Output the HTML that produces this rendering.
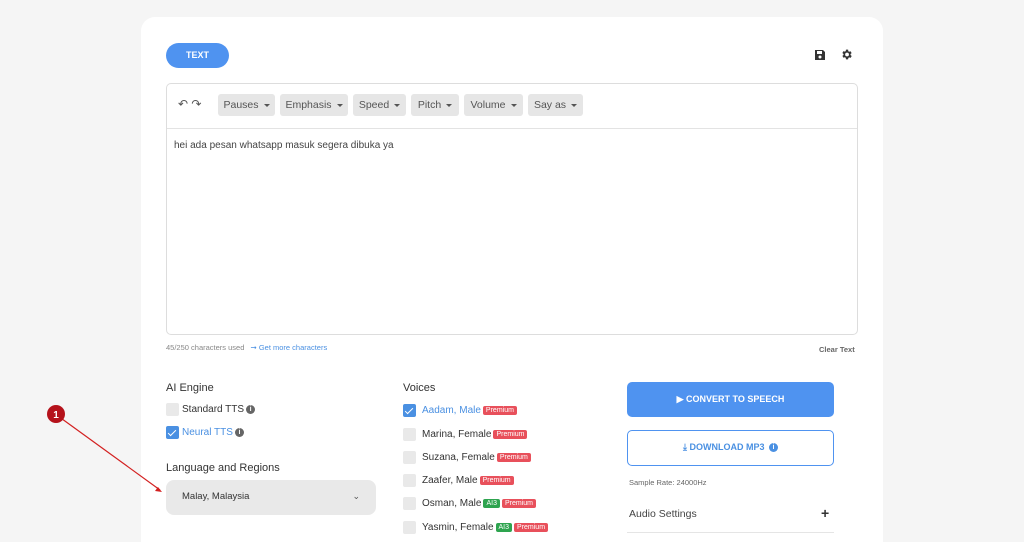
<!DOCTYPE html>
<html><head><meta charset="utf-8"><style>
*{box-sizing:border-box;margin:0;padding:0}
html,body{width:1024px;height:542px;overflow:hidden}
body{background:#f5f5f5;font-family:"Liberation Sans",sans-serif;position:relative;color:#333}
.card{position:absolute;left:141px;top:17px;width:742px;height:525px;background:#fff;border-radius:14px 14px 0 0}
.a{position:absolute}
.btn{position:absolute;top:94px;height:22px;background:#e6e6e6;border-radius:3px;font-size:10.5px;color:#555;line-height:22px;text-align:center}
.btn:after{content:"";display:inline-block;margin-left:5px;vertical-align:middle;border-left:3px solid transparent;border-right:3px solid transparent;border-top:3px solid #555}
.cb{position:absolute;width:13px;height:13px;background:#e9e9e9;border-radius:2px}
.cb.on{background:#4a90e2}
.cb.on:after{content:"";position:absolute;left:4px;top:1.5px;width:3px;height:7px;border:solid #fff;border-width:0 1.5px 1.5px 0;transform:rotate(45deg)}
.lbl{position:absolute;font-size:10px;color:#333}
.prem{display:inline-block;background:#e8505b;color:#fff;font-size:7px;padding:1px 3px;border-radius:2px;vertical-align:middle;margin-left:2px}
.ai{display:inline-block;background:#2ea44f;color:#fff;font-size:7px;padding:1px 3px;border-radius:2px;vertical-align:middle;margin-left:2px}
.info{display:inline-block;width:9px;height:9px;border-radius:50%;background:#666;color:#fff;font-size:7px;line-height:9px;text-align:center;font-weight:bold;vertical-align:middle;margin-left:2px}
</style></head><body>
<div class="card"></div>
<div class="a" style="left:166px;top:43px;width:63px;height:25px;background:#4f93f0;border-radius:13px;color:#fff;font-size:9px;font-weight:bold;text-align:center;line-height:25px">TEXT</div>
<svg class="a" style="left:814px;top:49px" width="12" height="12" viewBox="0 0 12 12"><path d="M1 1h8l2 2v8H1z" fill="#333"/><rect x="3" y="2" width="5" height="3" fill="#fff"/><circle cx="6" cy="8" r="1.5" fill="#fff"/></svg>
<svg class="a" style="left:840px;top:48px" width="13" height="13" viewBox="0 0 24 24"><path fill="#333" d="M19.4 13a7.5 7.5 0 0 0 0-2l2.1-1.6-2-3.5-2.5 1a7 7 0 0 0-1.7-1L15 3h-4l-.4 2.7a7 7 0 0 0-1.7 1l-2.5-1-2 3.5L6.5 11a7.5 7.5 0 0 0 0 2l-2.1 1.6 2 3.5 2.5-1a7 7 0 0 0 1.7 1L11 21h4l.4-2.7a7 7 0 0 0 1.7-1l2.5 1 2-3.5zM13 15.5a3.5 3.5 0 1 1 0-7 3.5 3.5 0 0 1 0 7z"/></svg>
<div class="a" style="left:166px;top:83px;width:692px;height:252px;border:1px solid #ddd;border-radius:5px"></div>
<div class="a" style="left:167px;top:128px;width:690px;height:1px;background:#e3e3e3"></div>
<div class="a" style="left:178px;top:97px;font-size:12px;color:#555">↶ ↷</div>
<div class="btn" style="left:218px;width:57px">Pauses</div>
<div class="btn" style="left:280px;width:68px">Emphasis</div>
<div class="btn" style="left:353px;width:53px">Speed</div>
<div class="btn" style="left:411px;width:48px">Pitch</div>
<div class="btn" style="left:464px;width:59px">Volume</div>
<div class="btn" style="left:528px;width:55px">Say as</div>
<div class="a" style="left:174px;top:140px;font-size:10px;color:#444">hei ada pesan whatsapp masuk segera dibuka ya</div>
<div class="a" style="left:166px;top:343px;font-size:7.5px;color:#888">45/250 characters used <span style="color:#4a90e2;margin-left:4px">➞ Get more characters</span></div>
<div class="a" style="left:819px;top:345px;font-size:7.5px;color:#666;font-weight:bold">Clear Text</div>
<div class="a" style="left:166px;top:382px;font-size:11px">AI Engine</div>
<div class="cb" style="left:166px;top:403px"></div><div class="lbl" style="left:182px;top:404px">Standard TTS<span class="info">i</span></div>
<div class="cb on" style="left:166px;top:426px"></div><div class="lbl" style="left:182px;top:427px;color:#4a90e2">Neural TTS<span class="info">i</span></div>
<div class="a" style="left:166px;top:462px;font-size:11px">Language and Regions</div>
<div class="a" style="left:166px;top:480px;width:210px;height:35px;background:#e9e9e9;border-radius:8px;font-size:9.5px;line-height:33px;padding-left:16px;color:#333">Malay, Malaysia<span style="position:absolute;right:16px;font-size:9px;color:#555">⌄</span></div>
<div class="a" style="left:403px;top:382px;font-size:11px">Voices</div>
<div class="cb on" style="left:403px;top:404px"></div><div class="lbl" style="left:422px;top:405px;color:#4a90e2">Aadam, Male<span class="prem">Premium</span></div>
<div class="cb" style="left:403px;top:428px"></div><div class="lbl" style="left:422px;top:429px">Marina, Female<span class="prem">Premium</span></div>
<div class="cb" style="left:403px;top:451px"></div><div class="lbl" style="left:422px;top:452px">Suzana, Female<span class="prem">Premium</span></div>
<div class="cb" style="left:403px;top:474px"></div><div class="lbl" style="left:422px;top:475px">Zaafer, Male<span class="prem">Premium</span></div>
<div class="cb" style="left:403px;top:497px"></div><div class="lbl" style="left:422px;top:498px">Osman, Male<span class="ai">AI3</span><span class="prem">Premium</span></div>
<div class="cb" style="left:403px;top:521px"></div><div class="lbl" style="left:422px;top:522px">Yasmin, Female<span class="ai">AI3</span><span class="prem">Premium</span></div>
<div class="a" style="left:627px;top:382px;width:207px;height:35px;background:#4f93f0;border-radius:5px;color:#fff;font-size:9px;font-weight:bold;text-align:center;line-height:35px">▶ CONVERT TO SPEECH</div>
<div class="a" style="left:627px;top:430px;width:207px;height:36px;border:1.5px solid #4f93f0;border-radius:5px;color:#4a90e2;font-size:9px;font-weight:bold;text-align:center;line-height:33px">⤓ DOWNLOAD MP3 <span class="info" style="background:#4a90e2">i</span></div>
<div class="a" style="left:629px;top:478px;font-size:7.5px;color:#666">Sample Rate: 24000Hz</div>
<div class="a" style="left:629px;top:508px;font-size:10.5px;color:#444">Audio Settings</div>
<div class="a" style="left:821px;top:505px;font-size:14px;color:#333;font-weight:bold">+</div>
<div class="a" style="left:627px;top:532px;width:207px;height:1px;background:#e5e5e5"></div>
<svg class="a" style="left:0;top:0" width="200" height="542"><line x1="58" y1="416" x2="160" y2="490" stroke="#d32020" stroke-width="1.2"/><path d="M162 492l-7-1 3-4z" fill="#d32020"/><circle cx="56" cy="414" r="9" fill="#b5121b"/><text x="56" y="418" font-size="10" font-weight="bold" fill="#fff" text-anchor="middle" font-family="Liberation Sans">1</text></svg>
</body></html>
